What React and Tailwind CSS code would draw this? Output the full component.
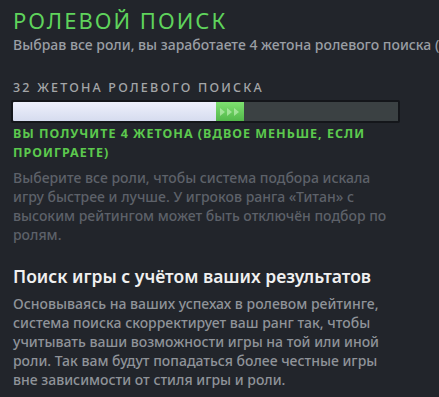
import React from "react";

const Chevrons = () => (
    <svg width="22" height="10" viewBox="0 0 22 10" className="opacity-60">
        <path d="M1 1 L6 5 L1 9 Z" fill="#c9f5c0" />
        <path d="M8 1 L13 5 L8 9 Z" fill="#c9f5c0" />
        <path d="M15 1 L20 5 L15 9 Z" fill="#c9f5c0" />
    </svg>
);

const App = () => {
    return (
        <div className="w-[439px] h-[397px] overflow-hidden bg-[#22252b] font-['Noto_Sans',sans-serif]">
            <div className="pl-[13px] pt-[4px]">
                {/* Header */}
                <h1 className="text-[22px] leading-[32px] tracking-[2px] text-[#5fd35c] whitespace-nowrap">
                    РОЛЕВОЙ ПОИСК
                </h1>
                <p className="text-[14px] leading-[18px] font-medium text-[#9a9ea4] whitespace-nowrap overflow-hidden">
                    Выбрав все роли, вы заработаете 4 жетона ролевого поиска (в
                </p>

                {/* Token progress */}
                <div className="mt-[26px] text-[12.5px] leading-[16px] tracking-[2.2px] font-medium text-[#a4a6a8]">
                    32 ЖЕТОНА РОЛЕВОГО ПОИСКА
                </div>
                <div className="mt-[4px] -ml-[2px] w-[389px] h-[23px] p-[2px] bg-[#14161a] rounded-[2px] flex">
                    <div className="w-[203px] h-full bg-linear-to-b from-[#eef0fb] to-[#d6dcef] rounded-l-[1px]" />
                    <div className="w-[28px] h-full bg-linear-to-b from-[#7ee070] to-[#52b84a] flex items-center justify-center">
                        <Chevrons />
                    </div>
                    <div className="flex-1 h-full bg-[#3b4143]" />
                </div>
                <p className="mt-[1px] text-[12.5px] leading-[19px] tracking-[1px] font-bold text-[#5cc94e] uppercase w-[400px]">
                    Вы получите 4 жетона (вдвое меньше, если проиграете)
                </p>

                <p className="mt-[6px] w-[385px] text-[14px] leading-[19px] font-medium text-[#5d6169]">
                    Выберите все роли, чтобы система подбора искала игру быстрее и лучше. У игроков ранга «Титан» с высоким рейтингом может быть отключён подбор по ролям.
                </p>

                {/* Performance-based matchmaking */}
                <h2 className="mt-[20px] text-[17.5px] leading-[24px] font-semibold text-[#f0f0f0]">
                    Поиск игры с учётом ваших результатов
                </h2>
                <p className="mt-[6px] w-[380px] text-[14px] leading-[19px] font-medium text-[#8f9399]">
                    Основываясь на ваших успехах в ролевом рейтинге, система поиска скорректирует ваш ранг так, чтобы учитывать ваши возможности игры на той или иной роли. Так вам будут попадаться более честные игры вне зависимости от стиля игры и роли.
                </p>
            </div>
        </div>
    );
};

export default App;
